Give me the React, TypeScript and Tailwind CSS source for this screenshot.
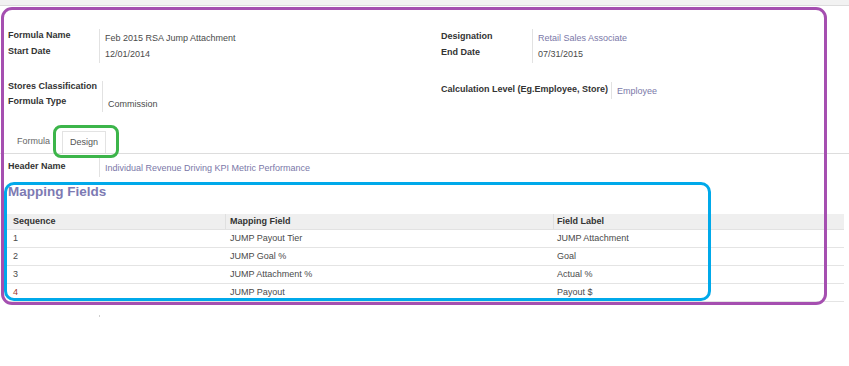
const label = "font-bold text-[#333]";
const muted = "text-[#7a78a8]";

type Row = { seq: string; field: string; label: string; red?: boolean };

const rows: Row[] = [
  { seq: "1", field: "JUMP Payout Tier", label: "JUMP Attachment" },
  { seq: "2", field: "JUMP Goal %", label: "Goal" },
  { seq: "3", field: "JUMP Attachment %", label: "Actual %" },
  { seq: "4", field: "JUMP Payout", label: "Payout $", red: true },
];

export default function App() {
  return (
    <div className="relative h-[366px] w-[849px] overflow-hidden bg-white font-['Liberation_Sans',Arial,sans-serif] text-[9px] text-[#4a4a4a]">
      <div className="h-[6px] border-b border-[#dcdcdc] bg-[#f2f2f2]" />

      {/* name / dates */}
      <div className="flex pt-[23px]">
        <div className="flex w-[441px] pl-[8px]">
          <div className={`-mt-[2px] w-[91px] leading-[16px] ${label}`}>
            <div>Formula Name</div>
            <div>Start Date</div>
          </div>
          <div className="border-l border-[#e2e2e2] py-px pl-[5px] leading-[16px]">
            <div>Feb 2015 RSA Jump Attachment</div>
            <div>12/01/2014</div>
          </div>
        </div>
        <div className="flex">
          <div className={`-mt-[1px] w-[91px] leading-[16px] ${label}`}>
            <div>Designation</div>
            <div>End Date</div>
          </div>
          <div className="border-l border-[#e2e2e2] py-px pl-[5px] leading-[16px]">
            <div className={muted}>Retail Sales Associate</div>
            <div>07/31/2015</div>
          </div>
        </div>
      </div>

      {/* classification / type */}
      <div className="mt-[18px] flex">
        <div className="flex w-[441px] pl-[8px]">
          <div className={`-mt-[2px] w-[94px] leading-[15px] ${label}`}>
            <div>Stores Classification</div>
            <div>Formula Type</div>
          </div>
          <div className="h-[31px] border-l border-[#e2e2e2] pl-[5px] pt-[15px] leading-[16px]">Commission</div>
        </div>
        <div className="mt-px flex">
          <div className={`-mt-px w-[170px] leading-[16px] ${label}`}>Calculation Level (Eg.Employee, Store)</div>
          <div className={`h-[17px] border-l border-[#e2e2e2] pl-[5px] pt-px leading-[16px] ${muted}`}>Employee</div>
        </div>
      </div>

      {/* tabs */}
      <div className="mt-[19px] flex items-end border-b border-[#dddddd] pl-[8px]">
        <div className="px-[9px] pb-[1px] leading-[21px] text-[#666]">Formula</div>
        <div className="ml-[3px] h-[22px] border-x border-t border-[#e3e3e3] bg-white pl-[7px] pr-[7px] leading-[21px] text-[#555]">
          Design
        </div>
      </div>

      {/* header name */}
      <div className="mt-px flex pl-[8px]">
        <div className={`w-[91px] pt-[3px] leading-[16px] ${label}`}>Header Name</div>
        <div className={`h-[22px] border-l border-[#e2e2e2] pl-[5px] pt-[5px] leading-[16px] ${muted}`}>
          Individual Revenue Driving KPI Metric Performance
        </div>
      </div>

      <div className="mt-[7px] pl-[8px] text-[13.5px] font-bold leading-[16px] text-[#7d7ab3]">Mapping Fields</div>

      {/* table */}
      <div className="ml-[7px] mt-[14px] w-[837px]">
        <div className={`flex h-[16px] border-b border-[#e2e2e2] bg-[#efefef] leading-[15px] ${label}`}>
          <div className="w-[218px] pl-[6px]">Sequence</div>
          <div className="w-[328px] border-l border-[#e0e0e0] pl-[4px]">Mapping Field</div>
          <div className="flex-1 border-l border-[#e0e0e0] pl-[3px]">Field Label</div>
        </div>
        {rows.map((r) => (
          <div key={r.seq} className="flex h-[18px] border-b border-[#e4e4e4] leading-[17px]">
            <div className={`w-[218px] pl-[6px] ${r.red ? "text-[#a33a2e]" : ""}`}>{r.seq}</div>
            <div className="w-[328px] pl-[5px]">{r.field}</div>
            <div className="flex-1 pl-[4px]">{r.label}</div>
          </div>
        ))}
      </div>

      <div className="ml-[99px] mt-[13px] h-[2px] w-px bg-[#cfcfcf]" />

      {/* annotation boxes drawn over the page */}
      <div className="pointer-events-none absolute left-[1px] top-[7px] h-[298px] w-[826px] rounded-[11px] border-[3px] border-[#a54fb0]" />
      <div className="pointer-events-none absolute left-[53px] top-[125px] h-[33px] w-[66px] rounded-[8px] border-[3px] border-[#3cb54a]" />
      <div className="pointer-events-none absolute left-[4px] top-[182px] h-[119px] w-[707px] rounded-[10px] border-[3px] border-[#00a9ea]" />
    </div>
  );
}
